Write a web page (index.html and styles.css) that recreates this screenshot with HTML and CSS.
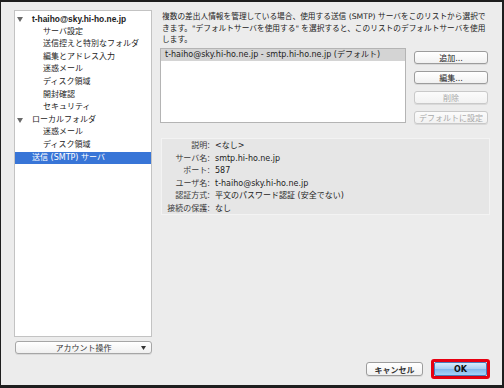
FILE: index.html
```html
<!DOCTYPE html>
<html lang="ja">
<head>
    <meta charset="UTF-8">
    <meta name="viewport" content="width=device-width, initial-scale=1.0">
    <title>アカウント設定</title>
    <link rel="stylesheet" href="styles.css">
</head>
<body>
    <div class="window">
        <div class="main">
            <div class="sidebar">
                <ul class="tree">
                    <li class="row top">
                        <svg class="disclosure" width="6" height="5" viewBox="0 0 6 5"><polygon points="0,0 6,0 3,5" fill="#6a6a6a"/></svg>
                        <span class="acct-name">t-haiho@sky.hi-ho.ne.jp</span>
                    </li>
                    <li class="row">サーバ設定</li>
                    <li class="row">送信控えと特別なフォルダ</li>
                    <li class="row">編集とアドレス入力</li>
                    <li class="row">迷惑メール</li>
                    <li class="row">ディスク領域</li>
                    <li class="row">開封確認</li>
                    <li class="row">セキュリティ</li>
                    <li class="row top">
                        <svg class="disclosure" width="6" height="5" viewBox="0 0 6 5"><polygon points="0,0 6,0 3,5" fill="#6a6a6a"/></svg>
                        <span>ローカルフォルダ</span>
                    </li>
                    <li class="row">迷惑メール</li>
                    <li class="row">ディスク領域</li>
                    <li class="row selected">送信 (SMTP) サーバ</li>
                </ul>
                <div class="popup-btn">
                    <span>アカウント操作</span>
                    <svg class="popup-arrow" width="5" height="4" viewBox="0 0 5 4"><polygon points="0,0 5,0 2.5,4" fill="#333"/></svg>
                </div>
            </div>

            <div class="content">
                <p class="description">複数の差出人情報を管理している場合、使用する送信 (SMTP) サーバをこのリストから選択で<br>きます。"デフォルトサーバを使用する" を選択すると、このリストのデフォルトサーバを使用<br>します。</p>

                <div class="server-area">
                    <div class="server-list">
                        <div class="server-row">t-haiho@sky.hi-ho.ne.jp - smtp.hi-ho.ne.jp (デフォルト)</div>
                    </div>
                    <div class="server-buttons">
                        <div class="btn">追加...</div>
                        <div class="btn">編集...</div>
                        <div class="btn disabled">削除</div>
                        <div class="btn disabled">デフォルトに設定</div>
                    </div>
                </div>

                <div class="details">
                    <span class="label">説明:</span><span class="value">&lt;なし&gt;</span>
                    <span class="label">サーバ名:</span><span class="value">smtp.hi-ho.ne.jp</span>
                    <span class="label">ポート:</span><span class="value">587</span>
                    <span class="label">ユーザ名:</span><span class="value">t-haiho@sky.hi-ho.ne.jp</span>
                    <span class="label">認証方式:</span><span class="value">平文のパスワード認証 (安全でない)</span>
                    <span class="label">接続の保護:</span><span class="value">なし</span>
                </div>
            </div>
        </div>

        <div class="footer">
            <div class="btn cancel">キャンセル</div>
            <div class="ok-frame">
                <div class="btn ok">OK</div>
            </div>
        </div>
    </div>
</body>
</html>
```

FILE: styles.css
```css
body {
    margin: 0;
    font-family: "DejaVu Sans", "Noto Sans CJK JP", sans-serif;
    font-size: 8px;
    color: #1c1c1c;
}

.window {
    box-sizing: border-box;
    width: 504px;
    height: 388px;
    background-color: #ececec;
    border-style: solid;
    border-color: #1e1e1e;
    border-width: 2px 2px 3px 1px;
    padding: 8px 12px 0 13px;
    display: flex;
    flex-direction: column;
}

.main {
    display: flex;
    gap: 8px;
}

/* Left: account tree */
.sidebar {
    width: 138px;
    flex-shrink: 0;
    display: flex;
    flex-direction: column;
    gap: 4px;
}

.tree {
    box-sizing: border-box;
    height: 327px;
    margin: 0;
    padding: 2px 0 0;
    list-style: none;
    background-color: #fff;
    border: 1px solid #c3c3c3;
}

.row {
    height: 12.6px;
    line-height: 12.6px;
    padding-left: 28px;
    white-space: nowrap;
}

.row.top {
    padding-left: 2px;
    display: flex;
    align-items: center;
}

.disclosure {
    margin-right: 9px;
}

.acct-name {
    font-family: "Liberation Sans", "Noto Sans CJK JP", sans-serif;
    font-size: 8.4px;
    font-weight: bold;
}

.row.selected {
    background-color: #3875d7;
    color: #fff;
    padding-left: 17px;
}

.popup-btn {
    box-sizing: border-box;
    height: 13px;
    margin-left: 1px;
    border: 1px solid #a6a6a6;
    border-radius: 3px;
    background: linear-gradient(#ffffff, #f0f0f0);
    box-shadow: 0 1px 0 rgba(0, 0, 0, 0.08);
    display: flex;
    align-items: center;
    justify-content: center;
    position: relative;
    color: #333;
}

.popup-arrow {
    position: absolute;
    right: 5px;
    top: 4px;
}

/* Right: SMTP server settings */
.content {
    flex: 1;
    min-width: 0;
    display: flex;
    flex-direction: column;
}

.description {
    margin: 0;
    padding: 1px 0 0 2px;
    font-size: 7.7px;
    line-height: 11.5px;
    white-space: nowrap;
    color: #222;
}

.server-area {
    display: flex;
    margin-top: 2.5px;
}

.server-list {
    box-sizing: border-box;
    width: 246px;
    height: 75px;
    flex-shrink: 0;
    border: 1px solid #b4b4b4;
    background-color: #fff;
}

.server-row {
    height: 12px;
    line-height: 12px;
    padding-left: 4px;
    background-color: #d4d4d4;
    white-space: nowrap;
}

.server-buttons {
    margin-left: 8px;
    padding-top: 3px;
    flex-shrink: 0;
    display: flex;
    flex-direction: column;
    gap: 7px;
}

.btn {
    box-sizing: border-box;
    width: 74px;
    height: 13px;
    flex-shrink: 0;
    border: 1px solid #9c9c9c;
    border-radius: 3px;
    background: linear-gradient(#ffffff, #f1f1f1);
    box-shadow: 0 1px 0 rgba(0, 0, 0, 0.08);
    display: flex;
    align-items: center;
    justify-content: center;
    color: #222;
    white-space: nowrap;
}

.btn.disabled {
    border-color: #c9c9c9;
    color: #a8a8a8;
    background: linear-gradient(#fbfbfb, #f2f2f2);
}

.details {
    box-sizing: border-box;
    height: 77px;
    margin: 14px 0 0 1px;
    padding-top: 1px;
    background-color: #e6e6e6;
    border: 1px solid #f3f3f3;
    display: grid;
    grid-template-columns: 48px 1fr;
    grid-auto-rows: 12.6px;
    column-gap: 5px;
    align-content: start;
    line-height: 12.6px;
}

.label {
    text-align: right;
    color: #3a3a3a;
    white-space: nowrap;
}

.value {
    white-space: nowrap;
}

/* Bottom: dialog buttons */
.footer {
    display: flex;
    justify-content: flex-end;
    align-items: center;
    gap: 8px;
    margin-top: 5px;
}

.btn.cancel {
    width: 57px;
    height: 14px;
    font-weight: bold;
    color: #333;
}

.ok-frame {
    box-sizing: border-box;
    width: 59px;
    height: 20px;
    border: 3px solid #e60012;
    border-radius: 3px;
}

.btn.ok {
    width: 100%;
    height: 100%;
    border-color: #4a7bbb;
    border-radius: 2px;
    background: linear-gradient(#d9ebfb 0%, #a9cff4 48%, #80b7ec 52%, #a6d2f8 100%);
    font-weight: bold;
    color: #111;
}
```
